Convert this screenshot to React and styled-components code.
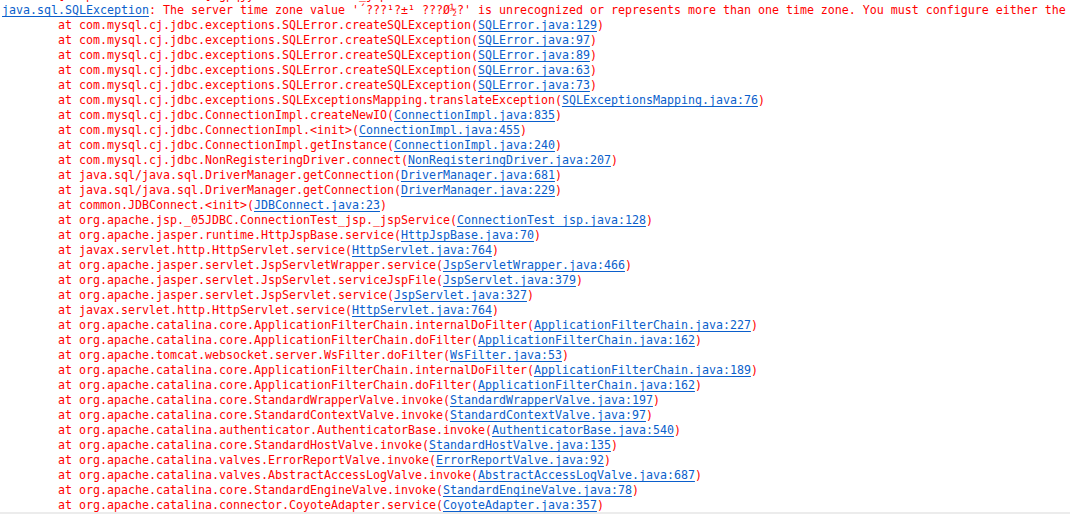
import styled, { createGlobalStyle } from 'styled-components';

const GlobalStyle = createGlobalStyle`
  html, body {
    margin: 0;
    padding: 0;
    background: #ffffff;
  }
`;

const Console = styled.div`
  width: 100vw;
  height: 514px;
  box-sizing: border-box;
  overflow: hidden;
  background: #ffffff;
  border-bottom: 2px solid #ececec;
`;

const Output = styled.div`
  display: flex;
  flex-direction: column;
  margin-top: -12px;
  padding-left: 2px;
  font-family: 'DejaVu Sans Mono', 'Liberation Mono', monospace;
  font-size: 11.63px;
  line-height: 15px;
  color: #ff0000;
  white-space: pre;
`;

const Line = styled.div`
  height: 15px;
  padding-left: ${(props) => (props.$frame ? '56px' : '0')};
`;

const Link = styled.span`
  color: #0b5fcc;
  text-decoration: underline;
  text-decoration-color: #0b5fcc;
  text-underline-offset: 2px;
`;

const frames = [
  ['com.mysql.cj.jdbc.exceptions.SQLError.createSQLException', 'SQLError.java:129'],
  ['com.mysql.cj.jdbc.exceptions.SQLError.createSQLException', 'SQLError.java:97'],
  ['com.mysql.cj.jdbc.exceptions.SQLError.createSQLException', 'SQLError.java:89'],
  ['com.mysql.cj.jdbc.exceptions.SQLError.createSQLException', 'SQLError.java:63'],
  ['com.mysql.cj.jdbc.exceptions.SQLError.createSQLException', 'SQLError.java:73'],
  ['com.mysql.cj.jdbc.exceptions.SQLExceptionsMapping.translateException', 'SQLExceptionsMapping.java:76'],
  ['com.mysql.cj.jdbc.ConnectionImpl.createNewIO', 'ConnectionImpl.java:835'],
  ['com.mysql.cj.jdbc.ConnectionImpl.<init>', 'ConnectionImpl.java:455'],
  ['com.mysql.cj.jdbc.ConnectionImpl.getInstance', 'ConnectionImpl.java:240'],
  ['com.mysql.cj.jdbc.NonRegisteringDriver.connect', 'NonRegisteringDriver.java:207'],
  ['java.sql/java.sql.DriverManager.getConnection', 'DriverManager.java:681'],
  ['java.sql/java.sql.DriverManager.getConnection', 'DriverManager.java:229'],
  ['common.JDBConnect.<init>', 'JDBConnect.java:23'],
  ['org.apache.jsp._05JDBC.ConnectionTest_jsp._jspService', 'ConnectionTest_jsp.java:128'],
  ['org.apache.jasper.runtime.HttpJspBase.service', 'HttpJspBase.java:70'],
  ['javax.servlet.http.HttpServlet.service', 'HttpServlet.java:764'],
  ['org.apache.jasper.servlet.JspServletWrapper.service', 'JspServletWrapper.java:466'],
  ['org.apache.jasper.servlet.JspServlet.serviceJspFile', 'JspServlet.java:379'],
  ['org.apache.jasper.servlet.JspServlet.service', 'JspServlet.java:327'],
  ['javax.servlet.http.HttpServlet.service', 'HttpServlet.java:764'],
  ['org.apache.catalina.core.ApplicationFilterChain.internalDoFilter', 'ApplicationFilterChain.java:227'],
  ['org.apache.catalina.core.ApplicationFilterChain.doFilter', 'ApplicationFilterChain.java:162'],
  ['org.apache.tomcat.websocket.server.WsFilter.doFilter', 'WsFilter.java:53'],
  ['org.apache.catalina.core.ApplicationFilterChain.internalDoFilter', 'ApplicationFilterChain.java:189'],
  ['org.apache.catalina.core.ApplicationFilterChain.doFilter', 'ApplicationFilterChain.java:162'],
  ['org.apache.catalina.core.StandardWrapperValve.invoke', 'StandardWrapperValve.java:197'],
  ['org.apache.catalina.core.StandardContextValve.invoke', 'StandardContextValve.java:97'],
  ['org.apache.catalina.authenticator.AuthenticatorBase.invoke', 'AuthenticatorBase.java:540'],
  ['org.apache.catalina.core.StandardHostValve.invoke', 'StandardHostValve.java:135'],
  ['org.apache.catalina.valves.ErrorReportValve.invoke', 'ErrorReportValve.java:92'],
  ['org.apache.catalina.valves.AbstractAccessLogValve.invoke', 'AbstractAccessLogValve.java:687'],
  ['org.apache.catalina.core.StandardEngineValve.invoke', 'StandardEngineValve.java:78'],
  ['org.apache.catalina.connector.CoyoteAdapter.service', 'CoyoteAdapter.java:357'],
];

const App = () => {
  return (
    <Console>
      <GlobalStyle />
      <Output>
        <Line>SEVERE: [http-nio-8080-exec-4] gpqjy ConnectionTest_jsp</Line>
        <Line>
          <Link>java.sql.SQLException</Link>
          {": The server time zone value '´???¹?±¹ ???Ø½?' is unrecognized or represents more than one time zone. You must configure either the server or JDBC driver (via the 'serverTimezone' configuration property) to use a more specifc time zone value if you want to utilize time zone support."}
        </Line>
        {frames.map(([method, source], i) => (
          <Line $frame key={i}>
            at {method}(<Link>{source}</Link>)
          </Line>
        ))}
      </Output>
    </Console>
  );
};

export default App;
